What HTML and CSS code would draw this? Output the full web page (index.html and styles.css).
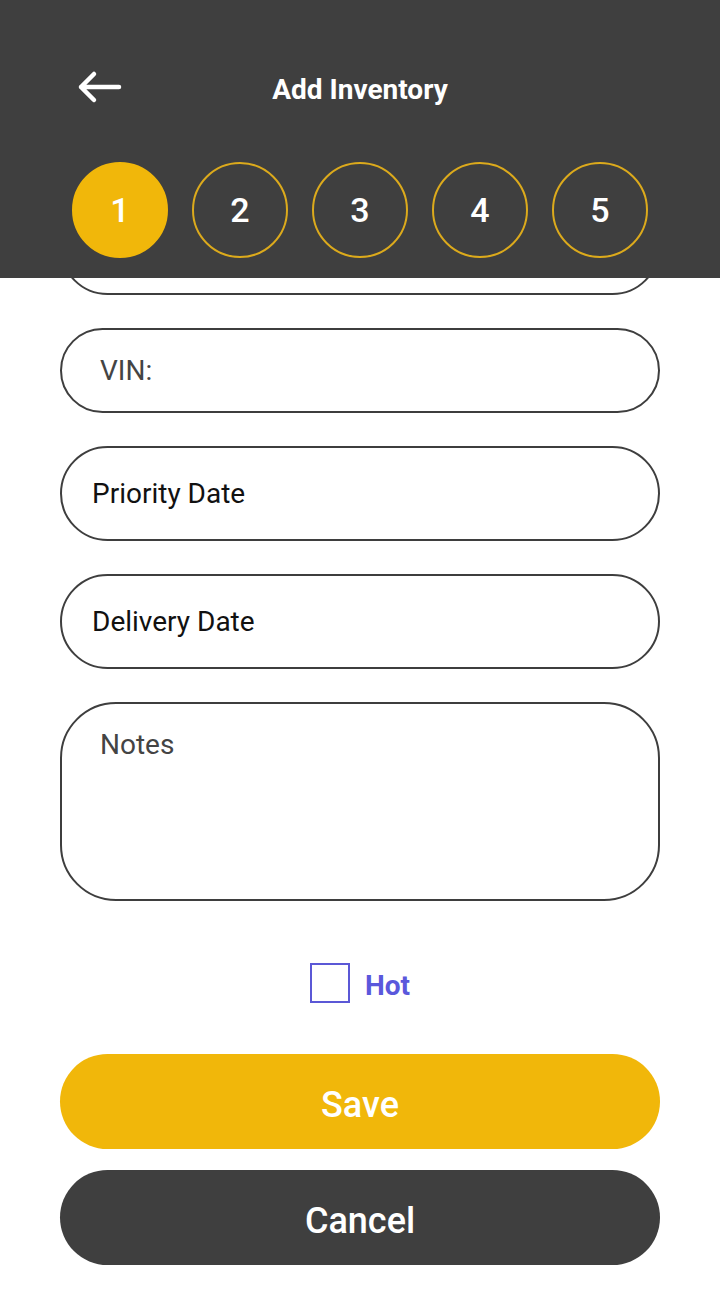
FILE: index.html
```html
<!DOCTYPE html>
<html>
<head>
<meta charset="utf-8">
<link rel="stylesheet" href="styles.css">
</head>
<body>
<div class="screen">
  <header class="header">
    <div class="topbar">
      <div class="left">
        <button class="back" aria-label="Back">
          <svg width="48" height="34" viewBox="0 0 48 34"><path d="M44 17H6M19 4L6 17l13 13" fill="none" stroke="#fff" stroke-width="4.5" stroke-linecap="round" stroke-linejoin="round"/></svg>
        </button>
      </div>
      <h1 class="title">Add Inventory</h1>
      <div class="right"></div>
    </div>
    <div class="steps">
      <div class="step active">1</div>
      <div class="step">2</div>
      <div class="step">3</div>
      <div class="step">4</div>
      <div class="step">5</div>
    </div>
  </header>
  <main class="content">
    <div class="form">
      <div class="field hidden-top"></div>
      <div class="field vin"><span class="placeholder">VIN:</span></div>
      <div class="field date"><span class="value">Priority Date</span></div>
      <div class="field date"><span class="value">Delivery Date</span></div>
      <div class="field notes"><span class="placeholder">Notes</span></div>
      <label class="check">
        <span class="box"></span>
        <span class="check-label">Hot</span>
      </label>
      <div class="buttons">
        <button class="btn save">Save</button>
        <button class="btn cancel">Cancel</button>
      </div>
    </div>
  </main>
</div>
</body>
</html>
```
FILE: styles.css
```css
* { box-sizing: border-box; }
html, body { margin: 0; padding: 0; background: #fff; }
body { font-family: Roboto, "Noto Sans", Arial, sans-serif; width: 720px; height: 1306px; overflow: hidden; }
.screen { display: flex; flex-direction: column; height: 1306px; }
.header { background: #3f3f3f; height: 278px; flex: none; position: relative; z-index: 2; }
.topbar { height: 162px; display: grid; grid-template-columns: 1fr auto 1fr; align-items: center; padding-top: 16px; }
.left { padding-left: 75px; display: flex; align-items: center; }
.back { background: none; border: 0; padding: 0; width: 48px; height: 34px; display: block; margin-top: -4px; }
.back svg { display: block; }
.title { margin: 0; color: #fff; font-size: 28px; font-weight: 700; }
.steps { display: flex; gap: 24px; padding-left: 72px; }
.step { width: 96px; height: 96px; border-radius: 50%; border: 2px solid #dcaa1c; color: #fff; font-size: 34px; font-weight: 500; display: flex; align-items: center; justify-content: center; }
.step.active { background: #f1b70a; border-color: #f1b70a; }
.content { flex: 1; overflow: hidden; }
.form { margin-top: -78px; padding: 0 60px; display: flex; flex-direction: column; gap: 33px; }
.field { border: 2px solid #3e3e3e; border-radius: 48px; height: 95px; display: flex; align-items: center; font-size: 28px; }
.field.vin { height: 85px; padding-left: 38px; }
.field.date { padding-left: 30px; }
.placeholder { color: #444; }
.value { color: #111; }
.field.notes { height: 199px; border-radius: 56px; align-items: flex-start; padding: 24px 0 0 38px; }
.check { display: flex; align-items: center; justify-content: center; gap: 15px; margin-top: 29px; height: 40px; }
.box { width: 40px; height: 40px; border: 2px solid #5b58d6; }
.check-label { color: #5a58dc; font-size: 28px; font-weight: 700; padding-top: 4px; }
.buttons { display: flex; flex-direction: column; gap: 21px; margin-top: 18px; }
.btn { height: 95px; border: 0; border-radius: 48px; color: #fff; font-family: Roboto, Arial, sans-serif; font-size: 36px; font-weight: 500; width: 100%; padding: 6px 0 0; }
.save { background: #f1b70a; }
.cancel { background: #3f3f3f; }
```
